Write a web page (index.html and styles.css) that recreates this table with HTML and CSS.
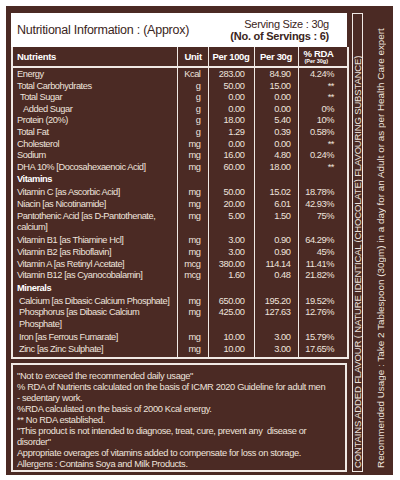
FILE: index.html
```html
<!DOCTYPE html>
<html lang="en">
  <head>
    <meta charset="UTF-8" />
    <title>Nutritional Information</title>
    <link rel="stylesheet" href="styles.css">
  </head>
  <body>
    <div class="label">
      <div class="main">
        <!-- title -->
        <div class="title-bar">
          <h1>Nutritional Information : (Approx)</h1>
          <div class="serving">
            <p>Serving Size : 30g</p>
            <p class="bold">(No. of Servings : 6)</p>
          </div>
        </div>

        <!-- table -->
        <table class="facts">
          <colgroup>
            <col class="c-name" />
            <col class="c-unit" />
            <col class="c-100" />
            <col class="c-30" />
            <col class="c-rda" />
          </colgroup>
          <thead>
            <tr>
              <th class="name">Nutrients</th>
              <th class="unit">Unit</th>
              <th>Per 100g</th>
              <th>Per 30g</th>
              <th class="rda">% RDA<small>(Per 30g)</small></th>
            </tr>
          </thead>
          <tbody>
            <tr class="first"><td>Energy</td><td>Kcal</td><td>283.00</td><td>84.90</td><td>4.24%</td></tr>
            <tr><td>Total Carbohydrates</td><td>g</td><td>50.00</td><td>15.00</td><td>**</td></tr>
            <tr><td class="in1">Total Sugar</td><td>g</td><td>0.00</td><td>0.00</td><td>**</td></tr>
            <tr><td class="in2">Added Sugar</td><td>g</td><td>0.00</td><td>0.00</td><td>0%</td></tr>
            <tr><td>Protein (20%)</td><td>g</td><td>18.00</td><td>5.40</td><td>10%</td></tr>
            <tr><td>Total Fat</td><td>g</td><td>1.29</td><td>0.39</td><td>0.58%</td></tr>
            <tr><td>Cholesterol</td><td>mg</td><td>0.00</td><td>0.00</td><td>**</td></tr>
            <tr><td>Sodium</td><td>mg</td><td>16.00</td><td>4.80</td><td>0.24%</td></tr>
            <tr><td>DHA 10% [Docosahexaenoic Acid]</td><td>mg</td><td>60.00</td><td>18.00</td><td>**</td></tr>
            <tr class="section"><td>Vitamins</td><td></td><td></td><td></td><td></td></tr>
            <tr><td>Vitamin C [as Ascorbic Acid]</td><td>mg</td><td>50.00</td><td>15.02</td><td>18.78%</td></tr>
            <tr><td>Niacin [as Nicotinamide]</td><td>mg</td><td>20.00</td><td>6.01</td><td>42.93%</td></tr>
            <tr class="wrap"><td>Pantothenic Acid [as D-Pantothenate,<br>calcium]</td><td>mg</td><td>5.00</td><td>1.50</td><td>75%</td></tr>
            <tr><td>Vitamin B1 [as Thiamine Hcl]</td><td>mg</td><td>3.00</td><td>0.90</td><td>64.29%</td></tr>
            <tr><td>Vitamin B2 [as Riboflavin]</td><td>mg</td><td>3.00</td><td>0.90</td><td>45%</td></tr>
            <tr><td>Vitamin A [as Retinyl Acetate]</td><td>mcg</td><td>380.00</td><td>114.14</td><td>11.41%</td></tr>
            <tr><td>Vitamin B12 [as Cyanocobalamin]</td><td>mcg</td><td>1.60</td><td>0.48</td><td>21.82%</td></tr>
            <tr class="section"><td>Minerals</td><td></td><td></td><td></td><td></td></tr>
            <tr><td class="in0">Calcium [as Dibasic Calcium Phosphate]</td><td>mg</td><td>650.00</td><td>195.20</td><td>19.52%</td></tr>
            <tr class="wrap"><td class="in0">Phosphorus [as Dibasic Calcium<br>Phosphate]</td><td>mg</td><td>425.00</td><td>127.63</td><td>12.76%</td></tr>
            <tr><td class="in0">Iron [as Ferrous Fumarate]</td><td>mg</td><td>10.00</td><td>3.00</td><td>15.79%</td></tr>
            <tr class="last"><td class="in0">Zinc [as Zinc Sulphate]</td><td>mg</td><td>10.00</td><td>3.00</td><td>17.65%</td></tr>
          </tbody>
        </table>

        <!-- footnotes -->
        <div class="notes">
          <p>"Not to exceed the recommended daily usage"</p>
          <p>% RDA of Nutrients calculated on the basis of ICMR 2020 Guideline for adult men</p>
          <p>- sedentary work.</p>
          <p>%RDA calculated on the basis of 2000 Kcal energy.</p>
          <p>** No RDA established.</p>
          <p>"This product is not intended to diagnose, treat, cure, prevent any&nbsp; disease or<br>disorder"</p>
          <p>Appropriate overages of vitamins added to compensate for loss on storage.</p>
          <p>Allergens : Contains Soya and Milk Products.</p>
        </div>
      </div>

      <div class="flavour">CONTAINS ADDED FLAVOUR ( NATURE IDENTICAL (CHOCOLATE) FLAVOURING SUBSTANCE)</div>
      <div class="usage">Recommended Usage : Take 2 Tablespoon (30gm) in a day for an Adult or as per Health Care expert</div>
    </div>
  </body>
</html>
```

FILE: styles.css
```css
body {
  margin: 0;
  background-color: #fff;
  font-family: "Liberation Sans", Arial, sans-serif;
}
.label {
  display: flex;
  box-sizing: border-box;
  width: 387px;
  height: 469px;
  margin: 6px 0 0 6px;
  padding: 7px 0 3px 5px;
  background-color: #4b2a24;
  color: #eee3dd;
}
.main {
  display: flex;
  flex-direction: column;
  width: 336px;
}
.title-bar {
  flex-shrink: 0;
  box-sizing: border-box;
  height: 34px;
  display: flex;
  justify-content: space-between;
  align-items: center;
  padding: 0 18px 0 6px;
  background-color: #fff;
  color: #3b2521;
}
.title-bar h1 {
  margin: 0 0 1px;
  font-size: 12.5px;
  font-weight: normal;
  letter-spacing: -0.25px;
}
.serving p {
  margin: 0;
  font-size: 11px;
  line-height: 12.5px;
  letter-spacing: -0.25px;
  text-align: right;
}
.serving .bold {
  font-weight: bold;
}

.facts {
  flex-shrink: 0;
  width: 100%;
  table-layout: fixed;
  border-collapse: collapse;
  border: 2px solid #f1e9e5;
  border-top: none;
  font-size: 9.3px;
  line-height: 11.6px;
  letter-spacing: -0.45px;
}
.c-name { width: 165px; }
.c-unit { width: 31px; }
.c-100 { width: 46px; }
.c-30 { width: 44px; }
.c-rda { width: 50px; }
.facts th {
  height: 19px;
  padding: 0;
  color: #fff;
  font-size: 9.5px;
  font-weight: bold;
  letter-spacing: -0.3px;
  text-align: center;
  border-bottom: 2px solid #f1e9e5;
  border-left: 1px solid #f1e9e5;
}
.facts th.name {
  text-align: left;
  padding-left: 4px;
  border-left: none;
}
.facts th.unit {
  text-align: left;
  padding-left: 7px;
}
.facts th.rda {
  text-align: left;
  padding-left: 5px;
  line-height: 9px;
}
.facts th small {
  display: block;
  font-size: 5.5px;
  line-height: 7px;
  letter-spacing: 0;
  padding-left: 1px;
}
.facts td {
  padding: 0 7px 0 0;
  text-align: right;
  vertical-align: top;
  white-space: nowrap;
  border-left: 1px solid #f1e9e5;
}
.facts td:first-child {
  padding-left: 4px;
  text-align: left;
  border-left: none;
}
.facts td:nth-child(3) { padding-right: 9px; }
.facts td:last-child { padding-right: 13px; }
.facts td.in0 { padding-left: 6px; }
.facts td.in1 { padding-left: 7px; }
.facts td.in2 { padding-left: 10px; }
.facts .first td { padding-top: 1px; }
.facts .section td {
  padding-top: 1px;
  padding-bottom: 1.5px;
  font-weight: bold;
  color: #fff;
}
.facts .wrap td { padding-bottom: 1.5px; }
.facts .last td { padding-bottom: 2px; }

.notes {
  flex: 1;
  margin-top: 4px;
  padding: 6px 4px 1px 4px;
  border: 2px solid #f1e9e5;
  font-size: 9.3px;
  line-height: 10.9px;
  letter-spacing: -0.35px;
}
.notes p {
  margin: 0;
}

.flavour {
  box-sizing: border-box;
  width: 11px;
  margin-left: 5px;
  padding-top: 3px;
  border: 1px solid #f1e9e5;
  writing-mode: vertical-rl;
  transform: rotate(180deg);
  font-size: 9.5px;
  line-height: 9px;
  letter-spacing: -0.15px;
  white-space: nowrap;
  overflow: hidden;
}
.usage {
  width: 12px;
  margin-left: 12px;
  padding-top: 4px;
  writing-mode: vertical-rl;
  transform: rotate(180deg);
  font-size: 9.9px;
  line-height: 12px;
  white-space: nowrap;
}
```
